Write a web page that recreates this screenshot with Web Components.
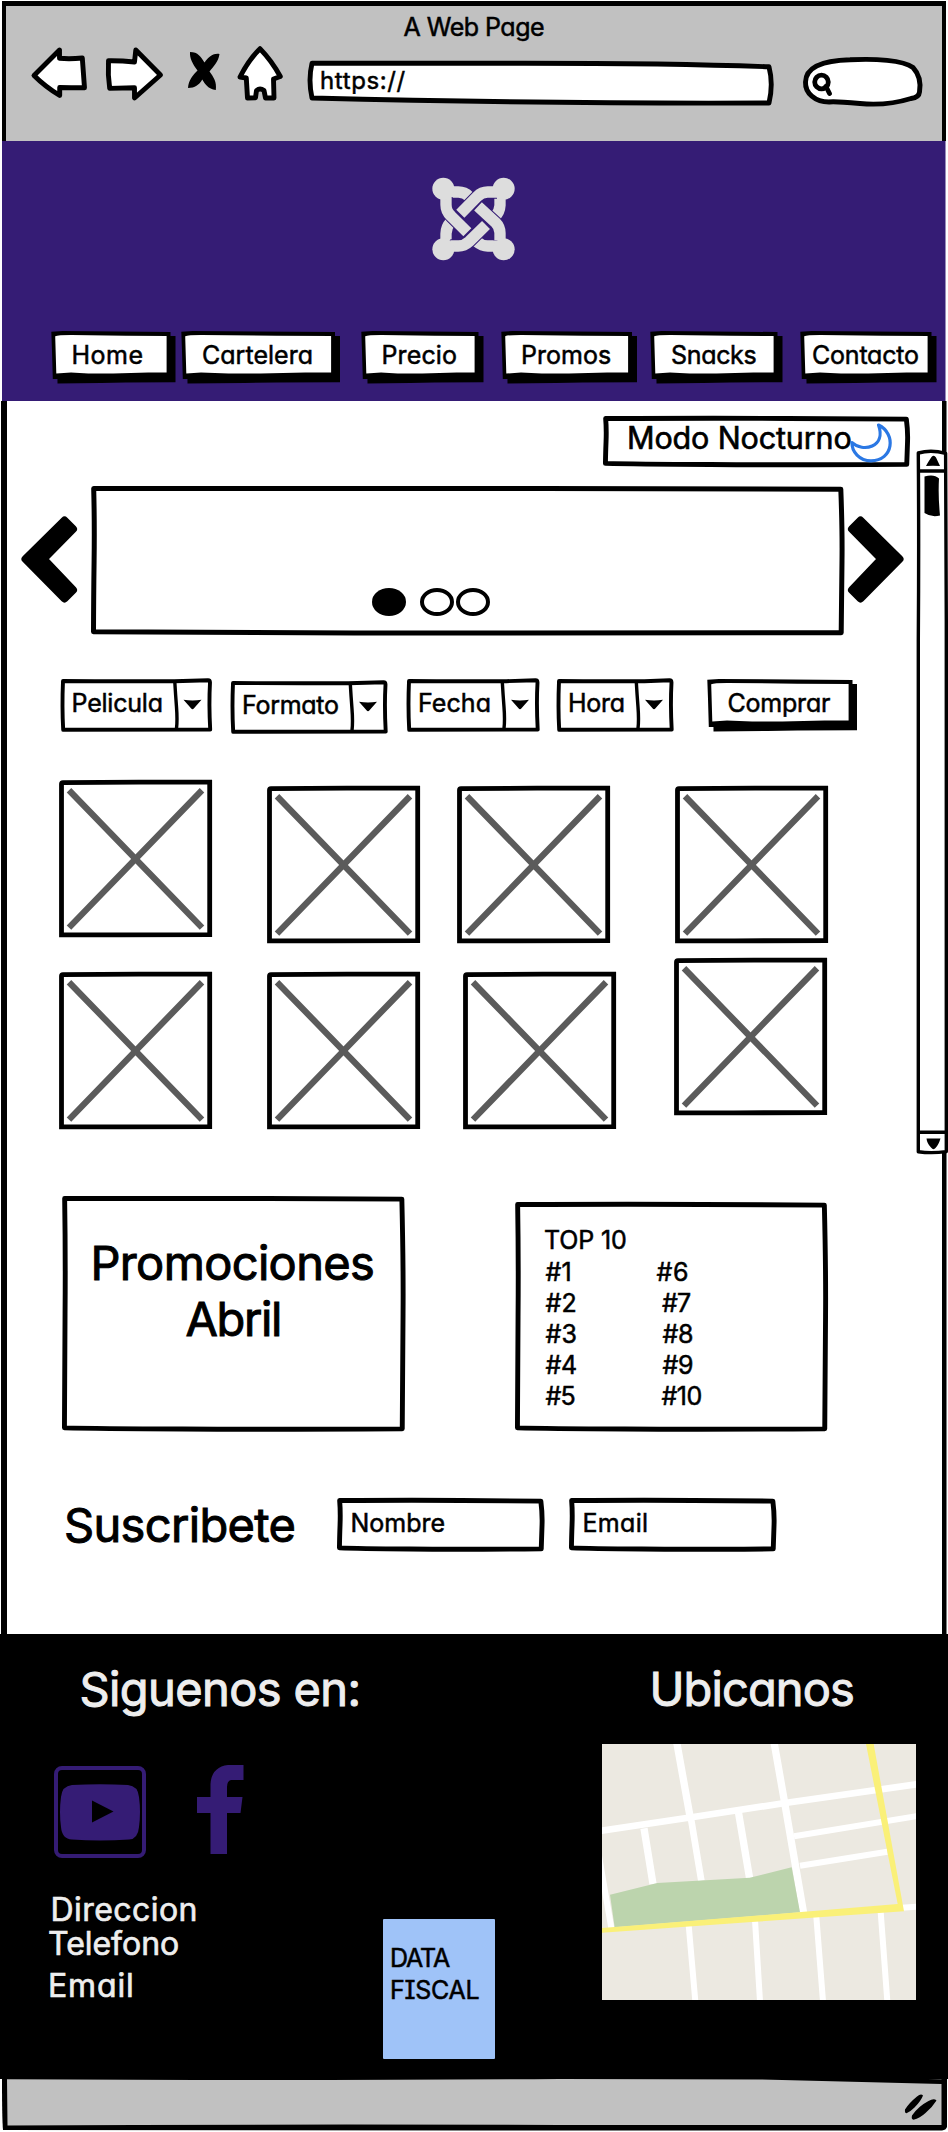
<!DOCTYPE html>
<html lang="es">
<head>
<meta charset="utf-8">
<title>A Web Page</title>
<style>
html,body{margin:0;padding:0;background:#fff}
body{font-family:Inter,"Open Sans",sans-serif;color:#000}
</style>
</head>
<body>
<web-page></web-page>
<script>
const def=(name,html,setup)=>customElements.define(name,class extends HTMLElement{
  connectedCallback(){
    if(this.shadowRoot)return;
    const root=this.attachShadow({mode:'open'});
    const t=document.createElement('template');
    t.innerHTML=typeof html==='function'?html(this):html;
    root.append(t.content.cloneNode(true));
    if(setup)setup(this,root);
  }
});

/* One line of text whose ink spans exactly `w` pixels; capitals are centred in the line box. */
const ctx=document.createElement('canvas').getContext('2d');
def('fit-text',`<style>
:host{display:block;flex:none;white-space:nowrap;line-height:1}
span{display:inline-block;white-space:pre;-webkit-text-stroke:.021em currentColor;font-feature-settings:"cv11","cv08";vertical-align:top}
</style><span><slot></slot></span>`,(el,root)=>{
  const s=+el.getAttribute('size')||25,w=+el.getAttribute('w'),span=root.querySelector('span'),txt=el.textContent;
  el.style.width=w+'px';el.style.height=s+'px';el.style.fontSize=s+'px';
  ctx.font=s+'px Inter';
  const m=ctx.measureText(txt),adv=span.getBoundingClientRect().width;
  const lb=-m.actualBoundingBoxLeft,rb=m.width-m.actualBoundingBoxRight;
  span.style.letterSpacing=((w-(adv-lb-rb))/(txt.length-1))+'px';
  span.style.marginLeft=-lb+'px';
});

/* Rectangle outlined with an uneven marker line. */
const wobble=(w,h,sw)=>{const a=sw/2,r=w-a,b=h-a;
  return `M${a+.2} ${a+.1}Q${w*.35} ${a-.4} ${w*.6} ${a}T${r-1.2} ${a+.7}Q${r+.4} ${h*.3} ${r} ${h*.5}T${r-.8} ${b-.2}Q${w*.6} ${b+.5} ${w*.35} ${b}T${a} ${b-1.2}Q${a+.1} ${h*.75} ${a+.6} ${h*.5}T${a+.2} ${a+.1}Z`};
def('sketch-box',el=>{const w=+el.getAttribute('w'),h=+el.getAttribute('h'),sw=+el.getAttribute('sw')||4.9;
  return `<style>
:host{display:block;position:relative;flex:none;box-sizing:border-box;width:${w}px;height:${h}px}
svg{position:absolute;left:0;top:0;z-index:0;overflow:visible}
div{position:relative}
</style><svg width="${w}" height="${h}"><path d="${wobble(w,h,sw)}" fill="#fff" stroke="#000" stroke-width="${sw}" stroke-linejoin="round"/></svg><div><slot></slot></div>`});

/* Button with a hard drop shadow. */
def('sketch-button',el=>{const w=+el.getAttribute('w'),h=53;
  return `<style>
:host{display:block;position:relative;flex:none;width:${w}px;height:${h}px}
svg{position:absolute;left:0;top:0}
div{position:relative;padding:11.5px 0 0 ${el.getAttribute('tx')}px}
</style><svg width="${w}" height="${h}">
<path d="M6 5H${w}V51.3L${w*.6} 51.4L${w*.4} 52L6.5 52.4Z"/>
<path d="M.3 .8L12 0L${w-5} 1V48H1.8L1 20Z"/>
<path fill="#fff" d="M4.2 5.2Q7 4 20 4L${w*.6} 4.7L${w-8.9} 5V41.6L${w*.78} 41.5L${w*.5} 42.6H${w*.3}L20 41.6L5.3 42.6Z"/>
</svg><div><slot></slot></div>`});

def('sketch-select',el=>{const w=+el.getAttribute('w'),h=53,d=w-35.5;
  return `<style>
:host{display:block;position:relative;flex:none;width:${w}px;height:${h}px}
svg{position:absolute;left:0;top:0;overflow:visible}
div{position:relative;padding:11.5px 0 0 13px}
</style><svg width="${w}" height="${h}" fill="none" stroke="#000" stroke-linejoin="round" stroke-linecap="round">
<path fill="#fff" stroke-width="3.9" d="M2 2Q${w*.3} 2.4 ${w*.75} 2.2L${w-4} 1.2Q${w-2} 1.2 ${w-2} 3.5Q${w-3.2} 25 ${w-1.8} 50.6Q${w*.6} 50.8 2.2 50.8Q.9 28 2 2Z"/>
<path stroke-width="3.4" d="M${d-1.7} 3Q${d-1} 15 ${d} 28T${d} 49.5"/>
<path fill="#000" stroke="none" d="M${w-28.5} 20.8Q${w-19.5} 22 ${w-10.5} 20.8L${w-18} 29.3Q${w-19.5} 31 ${w-21} 29.3Z"/>
</svg><div><slot></slot></div>`});

def('poster-card',`<style>:host{display:block;flex:none;width:153px;height:157.5px}svg{display:block;overflow:visible}</style>
<svg width="153" height="157.5"><path d="M2.5 4Q2.5 2.6 4 2.6L80 2.2H150.7V154.7L60 154.8H2.5Z" fill="#fff" stroke="#000" stroke-width="4.8"/>
<path d="M10 10.2L143 147.6M143 10.2L10 147.6" stroke="#5b5b5b" stroke-width="6.3"/></svg>`);

def('browser-bar',`<style>
:host{display:block;height:141px;box-sizing:border-box;background:linear-gradient(#000,#000) 2px 1px/944px 5px no-repeat,linear-gradient(#000,#000) 2px 2px/4px 139px no-repeat,linear-gradient(#000,#000) 942px 2px/4px 139px no-repeat,linear-gradient(#c1c1c1,#c1c1c1) 4px 4px/940px 137px no-repeat;padding-top:15px}
.title{margin-left:403.5px}
.tools{display:flex;align-items:flex-start;margin:3px 0 0 28px}
svg{display:block;flex:none;overflow:visible}
.i{fill:#fff;stroke:#000;stroke-width:4.9;stroke-linejoin:round}
.url{position:relative;margin-left:14px;width:474px;height:64px}
.url svg{position:absolute;left:0;top:0}
.url fit-text{position:relative;margin:25.5px 0 0 19px}
</style>
<fit-text class="title" size="25" w="140.5">A Web Page</fit-text>
<div class="tools">
<svg width="74" height="64" viewBox="28 43 74 64"><path class="i" d="M34 75.500L59.500 50V58.300Q70 59.300 82.300 58L84.500 87.700Q70 87.700 59.700 87.500V95.500Q45 86.500 34 75.500Z"/></svg>
<svg width="82" height="64" viewBox="102 43 82 64"><path class="i" d="M108.500 60.700Q121 60.500 134.500 62L135.800 50L160.500 75L134.500 98V87.700L109.700 88.400Q107.700 75 108.500 60.700Z"/></svg>
<svg width="50" height="64" viewBox="184 43 50 64"><path d="M190 52C198 52 201 57 204.500 62.500C209 56 214 53 219.500 54C218.500 62 213 67 209.500 71.500C213.500 77 217 82 215.800 90C208 89 205 84 202.300 79.500C199 85 195 88 188 88C188.500 80 193 75 197.500 70.500C192.500 64 189.500 58 190 52Z"/></svg>
<svg width="54" height="64" viewBox="234 43 54 64"><path class="i" d="M260 48.700Q272 61 280.300 76.500L273.500 79L274 98H265.500L264 90.500Q260 87.500 256.500 90.500L255.500 97.700L247.500 98L246.300 78L240 77Q248.500 60 260 48.700Z"/></svg>
<div class="url"><svg width="474" height="64" viewBox="302 43 474 64"><path class="i" d="M312 63.300H480Q660 62.700 769 66.800Q773.500 84 769 103Q560 104 312 98Q308 80 312 63.300Z"/></svg><fit-text size="24" w="84.5">https://</fit-text></div>
<svg style="margin-left:20px" width="130" height="66" viewBox="796 43 130 66"><path class="i" d="M829 102C815 102 805 93 805.500 82C806 67 823 60.500 850 59.800C875 58.500 903 60 913 67.500C919 74 921 83 919.500 92Q919 97.500 911 98.500Q887 106 860 103.500T829 102Z"/><circle cx="821.5" cy="82" r="6.8" fill="#fff" stroke="#000" stroke-width="4.8"/><path d="M826 86.500L829.500 93.500" stroke="#000" stroke-width="4.8" stroke-linecap="round"/></svg>
</div>`);

def('knot-logo',`<style>:host{display:block}svg{display:block}.s{fill:none;stroke:#ddd;stroke-width:34}.g{fill:none;stroke:#351c75;stroke-width:40}.p{fill:#ddd}</style>
<svg width="86" height="86" viewBox="92 77 258 258">
<g class="s"><path d="M150 125H174Q193 125 207 139"/><path d="M299 140V165Q298 185 284 199"/><path d="M290 287H262Q245 287 228 273"/><path d="M137 270V250Q137 230 151 215"/></g>
<path class="g" d="M290 125H262Q244 125 230 139L180 190M137 140V163Q137 183 152 197L201 246M299 270V248Q299 230 285 216L233 168M150 287H174Q192 287 207 273L257 224"/>
<path class="s" d="M290 125H262Q244 125 230 139L180 190M137 140V163Q137 183 152 197L201 246M299 270V248Q299 230 285 216L233 168M150 287H174Q192 287 207 273L257 224"/>
<g class="p"><circle cx="129" cy="115" r="33"/><circle cx="310" cy="115" r="33"/><circle cx="129" cy="297" r="33"/><circle cx="310" cy="297" r="33"/></g>
</svg>`);

def('site-header',`<style>
:host{display:block;height:260px;box-sizing:border-box;padding-top:35px;background:linear-gradient(#351c75,#351c75) 2px 0/943.5px 100% no-repeat}
knot-logo{margin-left:430.5px}
nav{display:flex;margin:69.5px 0 0 51px}
</style>
<knot-logo></knot-logo>
<nav>
<sketch-button w="124.5" tx="22.5"><fit-text w="69">Home</fit-text></sketch-button>
<sketch-button style="margin-left:5.5px" w="159" tx="22"><fit-text w="109">Cartelera</fit-text></sketch-button>
<sketch-button style="margin-left:21px" w="122.5" tx="22.5"><fit-text w="72.5">Precio</fit-text></sketch-button>
<sketch-button style="margin-left:17px" w="136" tx="22.5"><fit-text w="87">Promos</fit-text></sketch-button>
<sketch-button style="margin-left:13.5px" w="132.5" tx="22"><fit-text w="83.5">Snacks</fit-text></sketch-button>
<sketch-button style="margin-left:17.5px" w="136.5" tx="13"><fit-text w="105">Contacto</fit-text></sketch-button>
</nav>`);

def('night-toggle',`<style>:host{display:block;margin:15.5px 0 0 602.5px}
.r{display:flex;padding-left:26.5px}fit-text{margin-top:6.8px}svg{display:block;margin:5.5px 0 0 -2px;overflow:visible}</style>
<sketch-box w="307" h="51"><div class="r"><fit-text size="30.5" w="221.5">Modo Nocturno</fit-text>
<svg width="44" height="42" viewBox="848.5 422.5 44 42"><path d="M878 425.500C896 434 893 461.300 870.500 461.300C859 461.300 851 452 851.600 443.200C862 453 886 448 878 425.500Z" fill="#fff" stroke="#2b78e4" stroke-width="3.2" stroke-linejoin="round"/></svg></div></sketch-box>`);

def('hero-carousel',`<style>:host{display:flex;margin:19px 0 0 21px;height:150px}
svg{display:block;flex:none;overflow:visible}.c{margin-top:30px}sketch-box{margin:0 4px 0 13.5px}.d{margin:102px 0 0 281px}</style>
<svg class="c" width="56" height="87" viewBox="21 516 56 87"><path d="M64.5 520.5L73 529L43.5 559L73 590L64.5 598.5L25.5 559Z" stroke="#000" stroke-width="8" stroke-linejoin="round"/></svg>
<sketch-box w="753.5" h="149.5" sw="5"><svg class="d" width="120" height="30" viewBox="372 588 120 30"><ellipse cx="389" cy="602" rx="17" ry="14"/><g fill="#fff" stroke="#000" stroke-width="4"><ellipse cx="437" cy="602" rx="15" ry="12"/><ellipse cx="473" cy="602" rx="15" ry="12"/></g></svg></sketch-box>
<svg class="c" width="56" height="87" viewBox="21 516 56 87"><path transform="matrix(-1 0 0 1 98 0)" d="M64.5 520.5L73 529L43.5 559L73 590L64.5 598.5L25.5 559Z" stroke="#000" stroke-width="8" stroke-linejoin="round"/></svg>`);

def('ticket-filters',`<style>:host{display:flex;align-items:flex-start;margin:43px 0 0 60.5px;height:55px}</style>
<sketch-select w="151"><fit-text w="88.5">Pelicula</fit-text></sketch-select>
<sketch-select style="margin:2px 0 0 19.5px" w="156.5"><fit-text w="94">Formato</fit-text></sketch-select>
<sketch-select style="margin-left:19.5px" w="132.5"><fit-text w="70">Fecha</fit-text></sketch-select>
<sketch-select style="margin-left:17.5px" w="116.5"><fit-text w="54">Hora</fit-text></sketch-select>
<sketch-button style="margin-left:33px" w="150.5" tx="22"><fit-text w="101.5">Comprar</fit-text></sketch-button>`);

def('poster-grid',`<style>:host{display:block;margin-top:46px;height:350px}div{display:flex;align-items:flex-start;padding-left:58.5px}.a{height:178px}.b{height:172px}</style>
<div class="a"><poster-card></poster-card><poster-card style="margin:6px 0 0 55px"></poster-card><poster-card style="margin:6px 0 0 37px"></poster-card><poster-card style="margin:6px 0 0 65px"></poster-card></div>
<div class="b"><poster-card style="margin-top:14px"></poster-card><poster-card style="margin:14px 0 0 55px"></poster-card><poster-card style="margin:14px 0 0 43px"></poster-card><poster-card style="margin:0 0 0 58.5px"></poster-card></div>`);

def('info-panels',`<style>:host{display:flex;align-items:flex-start;margin:66px 0 0 62px;height:236px}
.p1{margin:42.5px 0 0 32.5px}.p2{margin:9px 0 0 124.5px}
.top{margin:6px 0 0 109px}.t{margin:26px 0 0 30.5px}
.row{display:flex;margin:6px 0 0 31px}.row.f{margin-top:7.3px}.l{width:111px}</style>
<sketch-box w="343.5" h="235.5"><fit-text class="p1" size="47" w="278.5">Promociones</fit-text><fit-text class="p2" size="47" w="92.5">Abril</fit-text></sketch-box>
<sketch-box class="top" w="313" h="229.5"><fit-text class="t" w="81">TOP 10</fit-text>
<div class="row f"><div class="l"><fit-text w="24">#1</fit-text></div><fit-text w="30.5">#6</fit-text></div>
<div class="row"><div class="l"><fit-text w="30">#2</fit-text></div><fit-text style="margin-left:5.5px" w="28">#7</fit-text></div>
<div class="row"><div class="l"><fit-text w="30">#3</fit-text></div><fit-text style="margin-left:6px" w="29.5">#8</fit-text></div>
<div class="row"><div class="l"><fit-text w="30.5">#4</fit-text></div><fit-text style="margin-left:6px" w="29.5">#9</fit-text></div>
<div class="row"><div class="l"><fit-text w="29">#5</fit-text></div><fit-text style="margin-left:5px" w="40">#10</fit-text></div>
</sketch-box>`);

def('subscribe-form',`<style>:host{display:flex;align-items:flex-start;margin:65.5px 0 0 66px;height:54px}.h{margin:3.5px 42px 0 0}.i{margin:13px 0 0 16px}</style>
<fit-text class="h" size="47" w="228.5">Suscribete</fit-text>
<sketch-box w="207.5" h="53.5"><fit-text class="i" w="92">Nombre</fit-text></sketch-box>
<sketch-box style="margin-left:24.5px" w="207.5" h="53.5"><fit-text class="i" w="62.5">Email</fit-text></sketch-box>`);

def('page-scrollbar',`<style>:host{display:block;position:absolute;left:915px;top:48px}svg{display:block;overflow:visible}</style>
<svg width="33" height="706" viewBox="915 448 33 706" fill="none" stroke="#000" stroke-linejoin="round"><path fill="#fff" stroke-width="3.4" d="M918.3 452Q931 448.500 945.6 452.300L946.300 620V1150.600Q932 1152.600 918.300 1150.800V640Q919 540 918.300 452Z"/><path stroke-width="3.6" d="M919 470H946M919 1131.300H946"/>
<path fill="#000" stroke="none" d="M926 465Q927.500 462 931.500 456Q934 453.500 936 456.500L940 465Q933 464.700 926 465ZM926.500 1137.500H940.500Q938.500 1144 935.500 1147Q933.500 1149.500 931 1146.500Q927 1142.500 926.500 1137.500ZM924.500 475.500Q934 472.500 939 477.500Q938 495 940 514.500Q932 517 924.500 512Z"/></svg>`);

def('main-view',`<style>:host{display:flex;flex-direction:column;position:relative;height:1233.5px;box-sizing:border-box;background:linear-gradient(#000,#000) 1px 0/6px 100% no-repeat,linear-gradient(#000,#000) 941.5px 0/4.5px 100% no-repeat,#fff}</style>
<night-toggle></night-toggle><hero-carousel></hero-carousel><ticket-filters></ticket-filters><poster-grid></poster-grid><info-panels></info-panels><subscribe-form></subscribe-form><page-scrollbar></page-scrollbar>`);

def('city-map',`<style>:host{display:block;width:314px;height:256px;overflow:hidden}svg{display:block}</style>
<svg width="314" height="256" viewBox="96 372 942 768"><path fill="#ece9e1" d="M96 372h942v768H96z"/>
<g fill="none" stroke="#fff" stroke-width="20"><path stroke-width="22" d="M320 366L362 600M612 366L646 560L701 880M222 625L249 792M505 575L539 776"/><path d="M362 590L394 782M90 633L370 591L645 549L1044 492"/><path stroke-width="18" d="M672 649L1044 588M690 737L952 695M995 863L1044 860M84 690L124 925M555 900L570 1144M739 890L759 1144M932 875L952 1144M356 915L376 1144"/></g>
<path fill="#bcd4ad" d="M120 824L262 789L539 773L665 742L690 877L134 922Z"/>
<path fill="#faf078" d="M96 924L545 888L983 852L888 372H911L1002 874L545 906L96 938Z"/></svg>`);

def('social-links',`<style>:host{display:flex;align-items:flex-start}svg{display:block;flex:none}.f{margin-left:51px;margin-top:-1px}</style>
<svg width="92" height="92" viewBox="0 0 92 92"><rect x="2" y="2" width="88" height="88" rx="6" fill="none" stroke="#351c75" stroke-width="4"/><path fill="#351c75" d="M18 19Q46 17.500 74 19Q84 20 85 31Q87 46 85 61Q84 73 75 73.600Q46 75.500 18 73.600Q8 73 7 61Q5 46 7 31Q8 20 18 19Z"/><path d="M38 34.500V56.500L59.500 45.500Z"/></svg>
<svg class="f" width="47" height="89" viewBox="0 0 47 89"><path fill="#351c75" d="M13.500 89V48H0V32H13.500V19Q14.500 2 31 0H46.500V15H34Q30 16 30 22V32H45.500L43.500 48H30V89Z"/></svg>`);

def('site-footer',`<style>
:host{display:grid;grid-template-columns:383px 219px 346px;height:445px;background:#000;color:#eee}
.a{padding-top:31px}.a>.h{margin-left:81.5px}
social-links{margin:53.8px 0 0 54px}
.d1{margin:36px 0 0 52.5px}.d2{margin:2px 0 0 49px}.d3{margin:10.5px 0 0 50px}
.note{margin-top:285.3px;width:112px;height:139.5px;background:#9fc3f8;color:#000;border-radius:1px}
.note fit-text{margin-left:9px}.n1{padding-top:27.2px;margin-bottom:7px}
.c .h{margin:31px 0 0 51.5px}city-map{margin-top:32px}
</style>
<div class="a"><fit-text class="h" size="47" w="276">Siguenos en:</fit-text><social-links></social-links>
<fit-text class="d1" size="32" w="143">Direccion</fit-text><fit-text class="d2" size="32" w="129">Telefono</fit-text><fit-text class="d3" size="32" w="82">Email</fit-text></div>
<div><div class="note"><div class="n1"><fit-text w="58">DATA</fit-text></div><fit-text w="86.5">FISCAL</fit-text></div></div>
<div class="c"><fit-text class="h" size="47" w="199.5">Ubicanos</fit-text><city-map></city-map></div>`);

def('status-bar',`<style>:host{display:block;height:53px}svg{display:block}</style>
<svg width="948" height="53" viewBox="0 2079 948 53"><path d="M2 2079H947V2127Q946 2130 942 2130.500H480L3 2130Q2 2120 2 2079Z"/><path fill="#c1c1c1" d="M7 2079.300Q300 2081 560 2079L760 2079.500L941.500 2084V2125H560Q300 2124 7.500 2125.500Z"/><path fill="#fff" d="M860 2077.500L941.500 2078V2079.300Z"/><path d="M923 2095.500Q921 2093 917 2096.500Q909 2103 905 2109.500Q904.500 2113 906.500 2113.300Q910 2112 914.500 2107.500Q921 2101 923 2095.500ZM936.500 2100.500Q934 2098 928.500 2101Q918 2106.500 912 2115.500Q911 2119.500 913.500 2119.700Q920 2118 925.500 2113Q932.500 2107 936.500 2100.500Z"/></svg>`);

def('web-page',`<style>:host{display:block;width:948px;height:2132px;overflow:hidden;background:#fff}</style>
<browser-bar></browser-bar><site-header style="margin-top:-.5px"></site-header><main-view></main-view><site-footer></site-footer><status-bar></status-bar>`);
</script>
</body>
</html>
